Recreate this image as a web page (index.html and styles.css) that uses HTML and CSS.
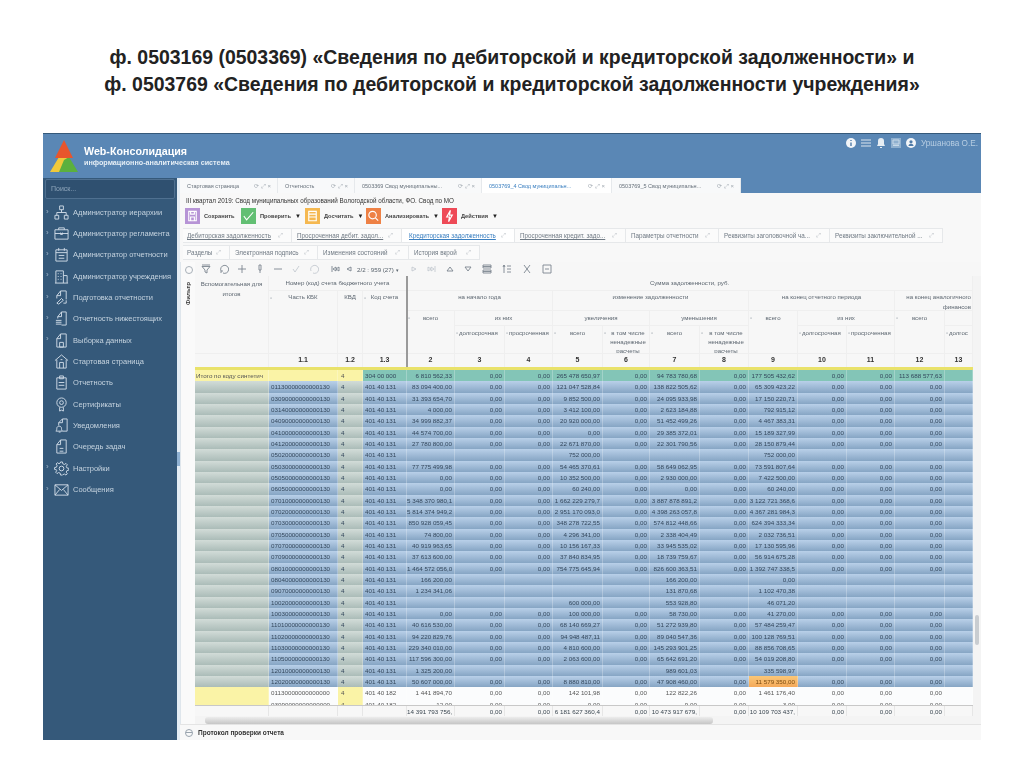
FILE: index.html
```html
<!DOCTYPE html>
<html lang="ru">
<head>
<meta charset="utf-8">
<title>Сведения по дебиторской и кредиторской задолженности</title>
<link rel="stylesheet" href="styles.css">
</head>
<body>
<svg class="defs" width="0" height="0" aria-hidden="true">
  <symbol id="i-tree" viewBox="0 0 16 16"><path d="M6 1h4v4H6zM1 11h4v4H1zM11 11h4v4h-4zM8 5v3M3 11V8h10v3"/></symbol>
  <symbol id="i-case" viewBox="0 0 16 16"><path d="M1 4h14v10H1zM5 4V2h6v2M1 8h14M7 7v2h2V7"/></symbol>
  <symbol id="i-doc" viewBox="0 0 16 16"><path d="M2 3h12v12H2zM5 1v3M11 1v3M2 6h12M5 9h6M5 12h6"/></symbol>
  <symbol id="i-org" viewBox="0 0 16 16"><path d="M2 15V2h8v13M10 7h4v8M1 15h14M4 5h1M7 5h1M4 8h1M7 8h1M4 11h1M7 11h1"/></symbol>
  <symbol id="i-edit" viewBox="0 0 16 16"><path d="M3 6l4-5h6v9M3 6h4V1M3 6v3M5 15l-2-1 5-5 2 2-5 4zM10 14h3v-3"/></symbol>
  <symbol id="i-stack" viewBox="0 0 16 16"><path d="M4 6l4-5h5v14H8M4 6h4V1M4 6v2M2 10h6M2 12h6M2 14h6"/></symbol>
  <symbol id="i-pick" viewBox="0 0 16 16"><path d="M3 6l4-5h6v14H3zM3 6h4V1M6 10h4v5H6z"/></symbol>
  <symbol id="i-home" viewBox="0 0 16 16"><path d="M1 7l7-6 7 6M3 6v9h10V6M6 15V9h4v6M7 6h2"/></symbol>
  <symbol id="i-clip" viewBox="0 0 16 16"><path d="M3 3h10v12H3zM6 1h4v3H6zM5 8h6M5 11h6"/></symbol>
  <symbol id="i-cert" viewBox="0 0 16 16"><circle cx="8" cy="6" r="5"/><circle cx="8" cy="6" r="2"/><path d="M6 11v4l2-1 2 1v-4"/></symbol>
  <symbol id="i-note" viewBox="0 0 16 16"><path d="M5 5l4-4h5v13H9M5 5h4V1M5 5v3M2 14c1-1 1-2 1-3 0-3 5-3 5 0 0 1 0 2 1 3zM5 15h2"/></symbol>
  <symbol id="i-queue" viewBox="0 0 16 16"><path d="M3 6l4-5h6v14H3zM3 6h4V1M6 10h4M6 13h4"/></symbol>
  <symbol id="i-gear" viewBox="0 0 16 16"><circle cx="8" cy="8" r="2.5"/><path d="M7 1h2l.4 2 1.7.7 1.7-1.100 1.400 1.400-1.100 1.700.7 1.700 2 .4v2l-2 .4-.7 1.700 1.100 1.700-1.400 1.400-1.700-1.100-1.700.7L9 15H7l-.4-2-1.700-.7-1.700 1.100-1.400-1.400 1.100-1.700L2.600 9.400l-2-.4V7l2-.4.7-1.700L2.200 3.200l1.400-1.400 1.700 1.100 1.300-.7z"/></symbol>
  <symbol id="i-mail" viewBox="0 0 16 16"><path d="M1 3h14v11H1zM1 3l7 6 7-6M1 14l5-6M15 14l-5-6"/></symbol>
</svg>

<h1 class="slide-title">ф. 0503169 (0503369) «Сведения по дебиторской и кредиторской задолженности» и<br>ф. 0503769 «Сведения по дебиторской и кредиторской задолженности учреждения»</h1>

<div class="app">
  <header class="app-head">
    <div class="brand">
      <svg class="logo" viewBox="0 0 28 33" aria-hidden="true">
        <path fill="#f0c93a" d="M0 32 9 17h10l-2 15z"/>
        <path fill="#5bb03e" d="M9 32 14 20l5-3 9 15z"/>
        <path fill="#e8552c" d="M14 0 23 18H5z"/>
      </svg>
      <div class="brand-text">
        <div class="brand-name">Web-Консолидация</div>
        <div class="brand-sub">информационно-аналитическая система</div>
      </div>
    </div>
    <div class="user-bar">
      <svg class="hi" viewBox="0 0 10 10"><circle cx="5" cy="5" r="5" fill="#f2f5f8"/><path d="M5 2v1M5 4.500V8" stroke="#4f7ba8" stroke-width="1.400"/></svg>
      <svg class="hi" viewBox="0 0 10 10"><path d="M0 2h10M0 5h10M0 8h10" stroke="#dbe5ee" stroke-width="1"/></svg>
      <svg class="hi" viewBox="0 0 10 10"><path d="M5 0c-2 0-3 1-3 3v3L1 8h8L8 6V3C8 1 7 0 5 0zM4 9h2v1H4z" fill="#e6edf3"/></svg>
      <svg class="hi" viewBox="0 0 10 10"><path d="M0 0h10v10H0z" fill="#8fb0cf"/><path d="M2 2h6v4H2zM2 7.500h6" stroke="#c8d9e8" fill="none"/></svg>
      <svg class="hi" viewBox="0 0 10 10"><circle cx="5" cy="5" r="5" fill="#f2f5f8"/><circle cx="5" cy="3.800" r="1.600" fill="#4f7ba8"/><path d="M2.500 8c0-3 5-3 5 0z" fill="#4f7ba8"/></svg>
      <span class="user-name">Уршанова О.Е.</span>
    </div>
  </header>

  <div class="app-body">
    <nav class="sidebar">
      <div class="search">Поиск...</div>
      <a class="nav-item has-sub"><svg class="nav-ico"><use href="#i-tree"/></svg>Администратор иерархии</a>
      <a class="nav-item has-sub"><svg class="nav-ico"><use href="#i-case"/></svg>Администратор регламента</a>
      <a class="nav-item has-sub"><svg class="nav-ico"><use href="#i-doc"/></svg>Администратор отчетности</a>
      <a class="nav-item has-sub"><svg class="nav-ico"><use href="#i-org"/></svg>Администратор учреждения</a>
      <a class="nav-item has-sub"><svg class="nav-ico"><use href="#i-edit"/></svg>Подготовка отчетности</a>
      <a class="nav-item has-sub"><svg class="nav-ico"><use href="#i-stack"/></svg>Отчетность нижестоящих</a>
      <a class="nav-item has-sub"><svg class="nav-ico"><use href="#i-pick"/></svg>Выборка данных</a>
      <a class="nav-item"><svg class="nav-ico"><use href="#i-home"/></svg>Стартовая страница</a>
      <a class="nav-item"><svg class="nav-ico"><use href="#i-clip"/></svg>Отчетность</a>
      <a class="nav-item"><svg class="nav-ico"><use href="#i-cert"/></svg>Сертификаты</a>
      <a class="nav-item"><svg class="nav-ico"><use href="#i-note"/></svg>Уведомления</a>
      <a class="nav-item"><svg class="nav-ico"><use href="#i-queue"/></svg>Очередь задач</a>
      <a class="nav-item has-sub"><svg class="nav-ico"><use href="#i-gear"/></svg>Настройки</a>
      <a class="nav-item has-sub"><svg class="nav-ico"><use href="#i-mail"/></svg>Сообщения</a>
    </nav>
    <div class="splitter"><span class="splitter-grip"></span></div>

    <main class="main">
      <div class="tabs">
        <div class="tab w98">Стартовая страница<i>⟳ ⤢ ×</i></div>
        <div class="tab w77">Отчетность<i>⟳ ⤢ ×</i></div>
        <div class="tab w127">0503369 Свод муниципальны...<i>⟳ ⤢ ×</i></div>
        <div class="tab tab-on w130">0503769_4 Свод муниципальн...<i>⟳ ⤢ ×</i></div>
        <div class="tab w129">0503769_5 Свод муниципальн...<i>⟳ ⤢ ×</i></div>
      </div>
      <div class="period">III квартал 2019: Свод муниципальных образований Вологодской области, ФО. Свод по МО</div>
      <div class="actions">
        <div class="act w56"><span class="act-ico purple"><svg viewBox="0 0 16 16"><path d="M4 3h8v10H4zM6 3v3h4V3M6 9h4v4H6z"/></svg></span>Сохранить</div>
        <div class="act w64"><span class="act-ico green"><svg viewBox="0 0 16 16"><path d="M3 8l3 4 7-8"/></svg></span>Проверить<b>▼</b></div>
        <div class="act w61"><span class="act-ico orange"><svg viewBox="0 0 16 16"><path d="M4 3h8v10H4zM4 6h8M4 9h8"/></svg></span>Досчитать<b>▼</b></div>
        <div class="act w76"><span class="act-ico coral"><svg viewBox="0 0 16 16"><circle cx="7" cy="7" r="4"/><path d="M10 10l3 3"/></svg></span>Анализировать<b>▼</b></div>
        <div class="act w60"><span class="act-ico red"><svg viewBox="0 0 16 16"><path d="M9 2 5 9h3l-1 5 4-7H8z"/></svg></span>Действия<b>▼</b></div>
      </div>
      <div class="subtabs first">
        <div class="subtab w109"><u>Дебиторская задолженность</u><i>⤢</i></div>
        <div class="subtab w110"><u>Просроченная дебит. задол...</u><i>⤢</i></div>
        <div class="subtab subtab-on w113"><u>Кредиторская задолженность</u><i>⤢</i></div>
        <div class="subtab w111"><u>Просроченная кредит. задо...</u><i>⤢</i></div>
        <div class="subtab w93">Параметры отчетности<i>⤢</i></div>
        <div class="subtab w111">Реквизиты заголовочной ча...<i>⤢</i></div>
        <div class="subtab w113">Реквизиты заключительной ...<i>⤢</i></div>
      </div>
      <div class="subtabs">
        <div class="subtab w47">Разделы<i>⤢</i></div>
        <div class="subtab w88">Электронная подпись<i>⤢</i></div>
        <div class="subtab w91">Изменения состояний<i>⤢</i></div>
        <div class="subtab w71">История вкрой<i>⤢</i></div>
      </div>

      <div class="workspace">
        <div class="filter-strip"><span class="filter-dot"></span><span class="filter-label">Фильтр</span></div>
        <div class="pane">
          <div class="grid-tools">
            <span class="ti"><svg viewBox="0 0 10 10"><path d="M1 1h8M1 2.500h8L6 6v3L4 8V6z"/></svg></span>
            <span class="ti"><svg viewBox="0 0 10 10"><path d="M2 7a4 4 0 1 1 2 2M2 9V7h2"/></svg></span>
            <span class="ti"><svg viewBox="0 0 10 10"><path d="M5 1v8M1 5h8"/></svg></span>
            <span class="ti"><svg viewBox="0 0 10 10"><path d="M4 1h2v5H4zM5 6v3"/></svg></span>
            <span class="ti"><svg viewBox="0 0 10 10"><path d="M1 5h8"/></svg></span>
            <span class="ti ti-faint"><svg viewBox="0 0 10 10"><path d="M2 5l2 3 4-6"/></svg></span>
            <span class="ti ti-faint"><svg viewBox="0 0 10 10"><path d="M2 7a4 4 0 1 1 2 2"/></svg></span>
            <span class="ti ti-first"><svg viewBox="0 0 10 10"><path d="M2 2v6M6 3 3 5l3 2zM9 3 6 5l3 2z"/></svg></span>
            <span class="ti ti-narrow"><svg viewBox="0 0 10 10"><path d="M7 3 3 5l4 2z"/></svg></span>
            <span class="pager">2/2 : 959 (27) <small>▾</small></span>
            <span class="ti ti-faint"><svg viewBox="0 0 10 10"><path d="M3 3l4 2-4 2z"/></svg></span>
            <span class="ti ti-faint"><svg viewBox="0 0 10 10"><path d="M1 3l3 2-3 2zM4 3l3 2-3 2zM8 2v6"/></svg></span>
            <span class="ti"><svg viewBox="0 0 10 10"><path d="M5 3 2 7h6z"/></svg></span>
            <span class="ti"><svg viewBox="0 0 10 10"><path d="M2 3h6L5 7z"/></svg></span>
            <span class="ti ti-wide"><svg viewBox="0 0 10 10"><path d="M1 1h8v3H1zM1 6h8v3H1zM1 2.500h8M1 7.500h8"/></svg></span>
            <span class="ti ti-wide"><svg viewBox="0 0 10 10"><path d="M2 1v8M1 3l1-2 1 2M5 2h4M5 5h4M5 8h4"/></svg></span>
            <span class="ti ti-wide"><svg viewBox="0 0 10 10"><path d="M2 1l6 8M8 1 2 9"/></svg></span>
            <span class="ti ti-wide"><svg viewBox="0 0 10 10"><path d="M1 1h8v8H1zM3 5h4"/></svg></span>
          </div>

          <div class="table-wrap">
            <div class="table">
              <div class="thead">
                <div class="th a1" >Вспомогательная для итогов</div>
                <div class="th a2">Номер (код) счета бюджетного учета</div>
                <div class="th a3 mark">Часть КБК</div>
                <div class="th a4">КВД</div>
                <div class="th a5 mark">Код счета</div>
                <div class="th s-all">Сумма задолженности, руб.</div>
                <div class="th s-start tall">на начало года</div>
                <div class="th s-change tall">изменение задолженности</div>
                <div class="th s-end tall">на конец отчетного периода</div>
                <div class="th s-prev">на конец аналогичного финансов</div>
                <div class="th v2 mark">всего</div>
                <div class="th w34">из них</div>
                <div class="th w56c">увеличения</div>
                <div class="th w78">уменьшения</div>
                <div class="th v9 mark">всего</div>
                <div class="th w1011">из них</div>
                <div class="th v12 mark">всего</div>
                <div class="th w13"></div>
                <div class="th d3 mark">долгосрочная</div>
                <div class="th d4 mark">просроченная</div>
                <div class="th d5 mark">всего</div>
                <div class="th d6 mark">в том числе ненадежные расчеты</div>
                <div class="th d7 mark">всего</div>
                <div class="th d8 mark">в том числе ненадежные расчеты</div>
                <div class="th d10 mark">долгосрочная</div>
                <div class="th d11 mark">просроченная</div>
                <div class="th d13 mark">долгос</div>
                <div class="th num n0"></div><div class="th num n1">1.1</div><div class="th num n2">1.2</div><div class="th num n3">1.3</div>
                <div class="th num n4">2</div><div class="th num n5">3</div><div class="th num n6">4</div><div class="th num n7">5</div>
                <div class="th num n8">6</div><div class="th num n9">7</div><div class="th num n10">8</div><div class="th num n11">9</div>
                <div class="th num n12">10</div><div class="th num n13">11</div><div class="th num n14">12</div><div class="th num n15">13</div>
                <span class="freeze"></span>
              </div>

              <div class="tbody">
                <div class="row row-total"><span>Итого по коду синтетич</span><span></span><span>4</span><span>304 00 000</span><span>6 810 562,33</span><span>0,00</span><span>0,00</span><span>265 478 650,97</span><span>0,00</span><span>94 783 780,68</span><span>0,00</span><span>177 505 432,62</span><span>0,00</span><span>0,00</span><span>113 688 577,63</span><span></span></div>
                <div class="row"><span></span><span>01130000000000130</span><span>4</span><span>401 40 131</span><span>83 094 400,00</span><span>0,00</span><span>0,00</span><span>121 047 528,84</span><span>0,00</span><span>138 822 505,62</span><span>0,00</span><span>65 309 423,22</span><span>0,00</span><span>0,00</span><span>0,00</span><span></span></div>
                <div class="row"><span></span><span>03090000000000130</span><span>4</span><span>401 40 131</span><span>31 393 654,70</span><span>0,00</span><span>0,00</span><span>9 852 500,00</span><span>0,00</span><span>24 095 933,98</span><span>0,00</span><span>17 150 220,71</span><span>0,00</span><span>0,00</span><span>0,00</span><span></span></div>
                <div class="row"><span></span><span>03140000000000130</span><span>4</span><span>401 40 131</span><span>4 000,00</span><span>0,00</span><span>0,00</span><span>3 412 100,00</span><span>0,00</span><span>2 623 184,88</span><span>0,00</span><span>792 915,12</span><span>0,00</span><span>0,00</span><span>0,00</span><span></span></div>
                <div class="row"><span></span><span>04090000000000130</span><span>4</span><span>401 40 131</span><span>34 999 882,37</span><span>0,00</span><span>0,00</span><span>20 920 000,00</span><span>0,00</span><span>51 452 499,26</span><span>0,00</span><span>4 467 383,31</span><span>0,00</span><span>0,00</span><span>0,00</span><span></span></div>
                <div class="row"><span></span><span>04100000000000130</span><span>4</span><span>401 40 131</span><span>44 574 700,00</span><span>0,00</span><span>0,00</span><span>0,00</span><span>0,00</span><span>29 385 372,01</span><span>0,00</span><span>15 189 327,99</span><span>0,00</span><span>0,00</span><span>0,00</span><span></span></div>
                <div class="row"><span></span><span>04120000000000130</span><span>4</span><span>401 40 131</span><span>27 780 800,00</span><span>0,00</span><span>0,00</span><span>22 671 870,00</span><span>0,00</span><span>22 301 790,56</span><span>0,00</span><span>28 150 879,44</span><span>0,00</span><span>0,00</span><span>0,00</span><span></span></div>
                <div class="row"><span></span><span>05020000000000130</span><span>4</span><span>401 40 131</span><span></span><span></span><span></span><span>752 000,00</span><span></span><span></span><span></span><span>752 000,00</span><span></span><span></span><span></span><span></span></div>
                <div class="row"><span></span><span>05030000000000130</span><span>4</span><span>401 40 131</span><span>77 775 499,98</span><span>0,00</span><span>0,00</span><span>54 465 370,61</span><span>0,00</span><span>58 649 062,95</span><span>0,00</span><span>73 591 807,64</span><span>0,00</span><span>0,00</span><span>0,00</span><span></span></div>
                <div class="row"><span></span><span>05050000000000130</span><span>4</span><span>401 40 131</span><span>0,00</span><span>0,00</span><span>0,00</span><span>10 352 500,00</span><span>0,00</span><span>2 930 000,00</span><span>0,00</span><span>7 422 500,00</span><span>0,00</span><span>0,00</span><span>0,00</span><span></span></div>
                <div class="row"><span></span><span>06050000000000130</span><span>4</span><span>401 40 131</span><span>0,00</span><span>0,00</span><span>0,00</span><span>60 240,00</span><span>0,00</span><span>0,00</span><span>0,00</span><span>60 240,00</span><span>0,00</span><span>0,00</span><span>0,00</span><span></span></div>
                <div class="row"><span></span><span>07010000000000130</span><span>4</span><span>401 40 131</span><span>5 348 370 980,1</span><span>0,00</span><span>0,00</span><span>1 662 229 279,7</span><span>0,00</span><span>3 887 878 891,2</span><span>0,00</span><span>3 122 721 368,6</span><span>0,00</span><span>0,00</span><span>0,00</span><span></span></div>
                <div class="row"><span></span><span>07020000000000130</span><span>4</span><span>401 40 131</span><span>5 814 374 949,2</span><span>0,00</span><span>0,00</span><span>2 951 170 093,0</span><span>0,00</span><span>4 398 263 057,8</span><span>0,00</span><span>4 367 281 984,3</span><span>0,00</span><span>0,00</span><span>0,00</span><span></span></div>
                <div class="row"><span></span><span>07030000000000130</span><span>4</span><span>401 40 131</span><span>850 928 059,45</span><span>0,00</span><span>0,00</span><span>348 278 722,55</span><span>0,00</span><span>574 812 448,66</span><span>0,00</span><span>624 394 333,34</span><span>0,00</span><span>0,00</span><span>0,00</span><span></span></div>
                <div class="row"><span></span><span>07050000000000130</span><span>4</span><span>401 40 131</span><span>74 800,00</span><span>0,00</span><span>0,00</span><span>4 296 341,00</span><span>0,00</span><span>2 338 404,49</span><span>0,00</span><span>2 032 736,51</span><span>0,00</span><span>0,00</span><span>0,00</span><span></span></div>
                <div class="row"><span></span><span>07070000000000130</span><span>4</span><span>401 40 131</span><span>40 919 963,65</span><span>0,00</span><span>0,00</span><span>10 156 167,33</span><span>0,00</span><span>33 945 535,02</span><span>0,00</span><span>17 130 595,96</span><span>0,00</span><span>0,00</span><span>0,00</span><span></span></div>
                <div class="row"><span></span><span>07090000000000130</span><span>4</span><span>401 40 131</span><span>37 613 600,00</span><span>0,00</span><span>0,00</span><span>37 840 834,95</span><span>0,00</span><span>18 739 759,67</span><span>0,00</span><span>56 914 675,28</span><span>0,00</span><span>0,00</span><span>0,00</span><span></span></div>
                <div class="row"><span></span><span>08010000000000130</span><span>4</span><span>401 40 131</span><span>1 464 572 056,0</span><span>0,00</span><span>0,00</span><span>754 775 645,94</span><span>0,00</span><span>826 600 363,51</span><span>0,00</span><span>1 392 747 338,5</span><span>0,00</span><span>0,00</span><span>0,00</span><span></span></div>
                <div class="row"><span></span><span>08040000000000130</span><span>4</span><span>401 40 131</span><span>166 200,00</span><span></span><span></span><span></span><span></span><span>166 200,00</span><span></span><span>0,00</span><span></span><span></span><span></span><span></span></div>
                <div class="row"><span></span><span>09070000000000130</span><span>4</span><span>401 40 131</span><span>1 234 341,06</span><span></span><span></span><span></span><span></span><span>131 870,68</span><span></span><span>1 102 470,38</span><span></span><span></span><span></span><span></span></div>
                <div class="row"><span></span><span>10020000000000130</span><span>4</span><span>401 40 131</span><span></span><span></span><span></span><span>600 000,00</span><span></span><span>553 928,80</span><span></span><span>46 071,20</span><span></span><span></span><span></span><span></span></div>
                <div class="row"><span></span><span>10030000000000130</span><span>4</span><span>401 40 131</span><span>0,00</span><span>0,00</span><span>0,00</span><span>100 000,00</span><span>0,00</span><span>58 730,00</span><span>0,00</span><span>41 270,00</span><span>0,00</span><span>0,00</span><span>0,00</span><span></span></div>
                <div class="row"><span></span><span>11010000000000130</span><span>4</span><span>401 40 131</span><span>40 616 530,00</span><span>0,00</span><span>0,00</span><span>68 140 669,27</span><span>0,00</span><span>51 272 939,80</span><span>0,00</span><span>57 484 259,47</span><span>0,00</span><span>0,00</span><span>0,00</span><span></span></div>
                <div class="row"><span></span><span>11020000000000130</span><span>4</span><span>401 40 131</span><span>94 220 829,76</span><span>0,00</span><span>0,00</span><span>94 948 487,11</span><span>0,00</span><span>89 040 547,36</span><span>0,00</span><span>100 128 769,51</span><span>0,00</span><span>0,00</span><span>0,00</span><span></span></div>
                <div class="row"><span></span><span>11030000000000130</span><span>4</span><span>401 40 131</span><span>229 340 010,00</span><span>0,00</span><span>0,00</span><span>4 810 600,00</span><span>0,00</span><span>145 293 901,25</span><span>0,00</span><span>88 856 708,65</span><span>0,00</span><span>0,00</span><span>0,00</span><span></span></div>
                <div class="row"><span></span><span>11050000000000130</span><span>4</span><span>401 40 131</span><span>117 596 300,00</span><span>0,00</span><span>0,00</span><span>2 063 600,00</span><span>0,00</span><span>65 642 691,20</span><span>0,00</span><span>54 019 208,80</span><span>0,00</span><span>0,00</span><span>0,00</span><span></span></div>
                <div class="row"><span></span><span>12010000000000130</span><span>4</span><span>401 40 131</span><span>1 325 200,00</span><span></span><span></span><span></span><span></span><span>989 601,03</span><span></span><span>335 598,97</span><span></span><span></span><span></span><span></span></div>
                <div class="row"><span></span><span>12020000000000130</span><span>4</span><span>401 40 131</span><span>50 607 000,00</span><span>0,00</span><span>0,00</span><span>8 880 810,00</span><span>0,00</span><span>47 908 460,00</span><span>0,00</span><span class="hot">11 579 350,00</span><span>0,00</span><span>0,00</span><span>0,00</span><span></span></div>
                <div class="row row-plain"><span></span><span>01130000000000000</span><span>4</span><span>401 40 182</span><span>1 441 894,70</span><span>0,00</span><span>0,00</span><span>142 101,98</span><span>0,00</span><span>122 822,26</span><span>0,00</span><span>1 461 176,40</span><span>0,00</span><span>0,00</span><span>0,00</span><span></span></div>
                <div class="row row-plain"><span></span><span>03090000000000000</span><span>4</span><span>401 40 182</span><span>12,00</span><span>0,00</span><span>0,00</span><span>0,00</span><span>0,00</span><span>9,00</span><span>0,00</span><span>3,00</span><span>0,00</span><span>0,00</span><span>0,00</span><span></span></div>
              </div>

              <div class="row row-foot"><span></span><span></span><span></span><span></span><span>14 391 793 756,</span><span>0,00</span><span>0,00</span><span>6 181 627 360,4</span><span>0,00</span><span>10 473 917 679,</span><span>0,00</span><span>10 109 703 437,</span><span>0,00</span><span>0,00</span><span>0,00</span><span></span></div>
            </div>
            <div class="vscroll"><span class="vthumb"></span></div>
          </div>

          <div class="hscroll"><span class="hthumb"></span></div>
        </div>
      </div>

      <div class="protocol"><span class="protocol-ico"></span>Протокол проверки отчета</div>
    </main>
  </div>
</div>
</body>
</html>
```

FILE: styles.css
```css
* { box-sizing: border-box; }
html, body { margin: 0; background: #fff; }
body { width: 1024px; height: 767px; overflow: hidden; font-family: "Liberation Sans", Arial, sans-serif; }
.defs { position: absolute; }

.slide-title {
  margin: 0; height: 133px; padding-top: 44px;
  font-size: 19.45px; line-height: 27px; font-weight: 700; text-align: center; color: #222; white-space: nowrap;
}

.app { margin-left: 43px; width: 938px; height: 607px; display: flex; flex-direction: column; filter: blur(.55px); }

.app-head {
  height: 45px; flex: none; display: flex; justify-content: space-between;
  background: #5a87b5; border-top: 1px solid #35597a; color: #fff;
}
.brand { display: flex; align-items: flex-start; padding: 6px 0 0 7px; }
.logo { width: 28px; height: 33px; margin-right: 6px; }
.brand-text { padding-top: 4px; }
.brand-name { font-size: 10.7px; font-weight: 700; line-height: 14px; }
.brand-sub { font-size: 7.2px; font-weight: 700; line-height: 9px; color: #e4edf5; }
.user-bar { display: flex; align-items: flex-start; padding: 4px 3px 0 0; }
.hi { width: 10px; height: 10px; margin-right: 5px; flex: none; }
.user-name { font-size: 8.2px; line-height: 11px; color: #b7cde2; }

.app-body { flex: 1; display: flex; min-height: 0; }

.sidebar { width: 134px; flex: none; background: #35597a; padding: 1px 2px 0; color: #c5d3df; }
.search {
  height: 20px; margin-bottom: 2.5px; padding: 0 5px; line-height: 18px; font-size: 7px; color: #8fa6bb;
  background: #2f5070; border: 1px solid #4f7090; border-radius: 2px;
}
.nav-item { position: relative; display: flex; align-items: center; height: 21.33px; padding-left: 9px; font-size: 7.5px; white-space: nowrap; }
.nav-item.has-sub::before { content: "›"; position: absolute; left: 1px; top: 5px; font-size: 8px; line-height: 10px; color: #9fb4c7; }
.nav-ico { width: 15px; height: 15px; margin-right: 4px; flex: none; fill: none; stroke: #cfdbe6; stroke-width: 1; }

.splitter { width: 3px; flex: none; background: #e4edf5; display: flex; align-items: center; }
.splitter-grip { width: 3px; height: 14px; background: #8fb1d2; }

.main { width: 801px; flex: none; display: flex; flex-direction: column; background: #f8f8f8; color: #3c4650; }

.tabs { height: 15px; flex: none; display: flex; background: #5a87b5; }
.tab {
  display: flex; align-items: center; justify-content: space-between; padding: 0 6px 0 7px;
  font-size: 5.5px; white-space: nowrap; background: #f8f9fa; border-right: 1px solid #e6e9ec; color: #66707a;
}
.tab i { font-style: normal; font-size: 6px; color: #a0a8b0; margin-left: 4px; }
.tab-on { background: #fff; color: #3a7fc0; }
.w98 { width: 98px; } .w77 { width: 77px; } .w127 { width: 127px; } .w130 { width: 130px; } .w129 { width: 129px; }
.w56 { width: 56px; } .w64 { width: 64px; } .w61 { width: 61px; } .w76 { width: 76px; } .w60 { width: 60px; }
.w109 { width: 109px; } .w110 { width: 110px; } .w113 { width: 113px; } .w111 { width: 111px; } .w93 { width: 93px; }
.w47 { width: 47px; } .w88 { width: 88px; } .w91 { width: 91px; } .w71 { width: 71px; }

.period { height: 14px; flex: none; padding: 1px 0 0 6px; line-height: 13px; font-size: 6.3px; color: #333; white-space: nowrap; }

.actions { height: 18px; flex: none; display: flex; align-items: center; padding-left: 5px; margin-bottom: 3px; font-size: 5.7px; font-weight: 700; color: #444; }
.act { display: flex; align-items: center; white-space: nowrap; }
.act b { font-size: 6px; margin-left: 4px; color: #222; }
.act-ico { width: 15px; height: 16px; margin-right: 4px; flex: none; display: block; }
.act-ico svg { display: block; width: 15px; height: 16px; fill: none; stroke: #fff; stroke-width: 1.2; }
.purple { background: #b794d6; } .green { background: #62bf73; } .orange { background: #f5b850; } .coral { background: #ee8145; } .red { background: #ee4a57; }

.subtabs { height: 15px; flex: none; display: flex; padding-left: 3px; margin-bottom: 2px; font-size: 6.3px; color: #707a84; }
.subtab {
  display: flex; align-items: center; justify-content: space-between; padding: 0 8px 0 5px; white-space: nowrap;
  border: 1px solid #e6e8ea; border-left-width: 0; background: #fbfbfb; overflow: hidden;
}
.subtab:first-child { padding-left: 4px; }
.subtab i { font-style: normal; font-size: 6px; color: #b4bac0; }
.subtab-on { color: #3a7fc0; background: #fff; padding-left: 7px; }

.workspace { height: 462px; flex: none; display: flex; }
.filter-strip { width: 15px; flex: none; position: relative; background: #fafafa; border-left: 1px solid #dfe6ec; }
.filter-dot { position: absolute; left: 4px; top: 4px; width: 8px; height: 8px; border: 1px solid #a8b0b8; border-radius: 50%; }
.filter-label { position: absolute; left: 3px; top: 20px; writing-mode: vertical-rl; transform: rotate(180deg); font-size: 6.2px; font-weight: 700; color: #333; }

.pane { width: 786px; flex: none; display: flex; flex-direction: column; }
.grid-tools { height: 14px; flex: none; display: flex; align-items: center; padding-left: 2px; color: #6a7480; background: #f7f7f7; }
.ti { width: 18px; height: 10px; flex: none; display: flex; justify-content: center; }
.ti svg { width: 10px; height: 10px; fill: none; stroke: #7a848e; stroke-width: .9; }
.ti-faint svg { stroke: #c4cad0; }
.ti-first { margin-left: 4px; width: 16px; }
.ti-narrow { width: 12px; }
.ti-wide { width: 20px; }
.pager { width: 50px; font-size: 6.2px; white-space: nowrap; color: #5a646e; padding-left: 2px; }
.pager small { font-size: 5px; }

.table-wrap { height: 440px; flex: none; display: flex; }
.table { width: 778px; flex: none; display: flex; flex-direction: column; }
.vscroll { width: 8px; flex: none; position: relative; background: #f4f4f4; }
.vthumb { position: absolute; left: 2px; top: 339px; width: 4px; height: 30px; background: #c9cdd1; border-radius: 2px; }
.hscroll { height: 8px; flex: none; position: relative; background: #f4f4f4; }
.hthumb { position: absolute; left: 10px; top: 1px; width: 508px; height: 7px; background: linear-gradient(#ececec, #c6c6c6); border-radius: 3px; }

.thead, .row { display: grid; grid-template-columns: 74px 69px 25px 44px 48px 50px 48px 50px 47px 50px 49px 49px 49px 48px 50px 28px; }
.thead { position: relative; height: 91px; flex: none; grid-template-rows: 15px 20px 15px 28px 13px; background: #f7f7f7; font-size: 6.1px; color: #5c6670; }
.th { position: relative; padding: 2px 1px 0; text-align: center; line-height: 9.500px; border-right: 1px solid #efefef; border-bottom: 1px solid #efefef; overflow: hidden; }
.tall { padding-top: 1px; }
.mark::before { content: "▫"; position: absolute; left: 1px; top: 3px; font-size: 6px; color: #a0a8b0; }
.a1 { grid-column: 1; grid-row: 1 / 5; padding-top: 3px; }
.a2 { grid-column: 2 / 5; grid-row: 1; white-space: nowrap; }
.a3 { grid-column: 2; grid-row: 2 / 5; padding-top: 1px; }
.a4 { grid-column: 3; grid-row: 2 / 5; padding-top: 1px; }
.a5 { grid-column: 4; grid-row: 2 / 5; padding-top: 1px; }
.s-all { grid-column: 5 / 17; grid-row: 1; }
.s-start { grid-column: 5 / 8; grid-row: 2; }
.s-change { grid-column: 8 / 12; grid-row: 2; }
.s-end { grid-column: 12 / 15; grid-row: 2; }
.s-prev { grid-column: 15 / 17; grid-row: 2; padding-top: 1px; text-align: right; }
.v2 { grid-column: 5; grid-row: 3 / 5; }
.w34 { grid-column: 6 / 8; grid-row: 3; }
.w56c { grid-column: 8 / 10; grid-row: 3; }
.w78 { grid-column: 10 / 12; grid-row: 3; }
.v9 { grid-column: 12; grid-row: 3 / 5; }
.w1011 { grid-column: 13 / 15; grid-row: 3; }
.v12 { grid-column: 15; grid-row: 3 / 5; }
.w13 { grid-column: 16; grid-row: 3; }
.d3 { grid-column: 6; grid-row: 4; white-space: nowrap; padding-left: 4px; text-align: left; }
.d4 { grid-column: 7; grid-row: 4; white-space: nowrap; padding-left: 4px; text-align: left; }
.d5 { grid-column: 8; grid-row: 4; }
.d6 { grid-column: 9; grid-row: 4; line-height: 9px; padding: 2px 0 0 4px; }
.d7 { grid-column: 10; grid-row: 4; }
.d8 { grid-column: 11; grid-row: 4; line-height: 9px; padding: 2px 0 0 4px; }
.d10 { grid-column: 13; grid-row: 4; white-space: nowrap; padding-left: 4px; text-align: left; }
.d11 { grid-column: 14; grid-row: 4; white-space: nowrap; padding-left: 4px; text-align: left; }
.d13 { grid-column: 16; grid-row: 4; white-space: nowrap; padding-left: 4px; text-align: left; }
.num { grid-row: 5; padding: 1px 0 0; font-size: 7px; font-weight: 700; color: #333; border-bottom: 0; }
.n0 { grid-column: 1; } .n1 { grid-column: 2; } .n2 { grid-column: 3; } .n3 { grid-column: 4; } .n4 { grid-column: 5; } .n5 { grid-column: 6; }
.n6 { grid-column: 7; } .n7 { grid-column: 8; } .n8 { grid-column: 9; } .n9 { grid-column: 10; } .n10 { grid-column: 11; } .n11 { grid-column: 12; }
.n12 { grid-column: 13; } .n13 { grid-column: 14; } .n14 { grid-column: 15; } .n15 { grid-column: 16; }
.freeze { position: absolute; left: 211px; top: 0; width: 2px; height: 91px; background: #9a9a9a; }

.tbody { height: 338px; flex: none; overflow: hidden; border-top: 3.500px solid #e9e26a; }

.row { height: 11.33px; font-size: 6.25px; line-height: 11.33px; color: #33475c; white-space: nowrap; }
.row span {
  display: block; overflow: hidden; padding-right: 2px; text-align: right;
  background: linear-gradient(#b9d0e9, #86a5c4); border-right: 1px solid rgba(255, 255, 255, .25);
}
.row span:nth-child(1), .row span:nth-child(3) { background: linear-gradient(#d2dcd8, #abbcb8); }
.row span:nth-child(1) { text-align: left; padding-left: 1px; }
.row span:nth-child(2), .row span:nth-child(4) { text-align: left; padding-left: 2px; }
.row span:nth-child(3) { text-align: left; padding-left: 3px; }

.row-total span { background: #83c5b7; }
.row-total span:nth-child(1), .row-total span:nth-child(2), .row-total span:nth-child(3) { background: #faf3a6; color: #555; }

.row-plain span { background: #fbfcfd; color: #555; }
.row-plain span:nth-child(1), .row-plain span:nth-child(3) { background: #faf3a6; }
.row .hot { background: linear-gradient(#fbc777, #f4a95a); color: #7a4a10; }

.row-foot { flex: none; height: 11px; line-height: 11px; border-top: 1px solid #c8c8c8; }
.row-foot span, .row-foot span:nth-child(1), .row-foot span:nth-child(3) { background: #f7f7f7; color: #3a4650; border-right-color: #e6e6e6; }

.protocol { flex: 1; display: flex; align-items: center; padding-left: 5px; font-size: 6.5px; font-weight: 700; color: #333; background: #f8f8f8; border-top: 1px solid #e4e4e4; }
.protocol-ico { width: 8px; height: 8px; margin-right: 5px; border: 1px solid #9aa4ae; border-radius: 50%; background: linear-gradient(transparent 2.500px, #9aa4ae 2.500px, #9aa4ae 3.500px, transparent 3.500px); }
```
